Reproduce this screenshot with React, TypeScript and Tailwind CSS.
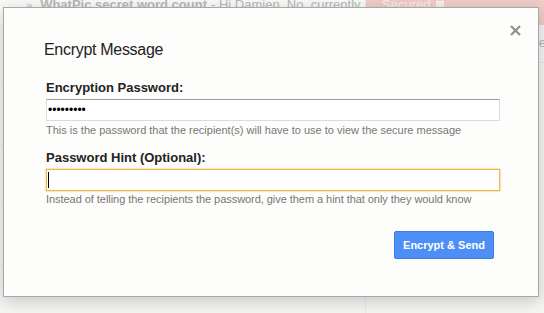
import React from "react";

export default function App() {
  return (
    <div className="relative w-[544px] h-[313px] overflow-hidden bg-[#f6f6f5] font-['Liberation_Sans',Arial,sans-serif]">
      {/* background page */}
      <div className="flex h-full">
        <div className="w-[366px] flex flex-col border-r border-[#ebebeb]">
          <div className="h-[30px] flex items-start pl-[26px] -mt-[5px] text-[13px] text-[#b9b9b9] whitespace-nowrap bg-[#fafaf9] border-b border-[#ececec]">
            <span className="mr-[8px] text-[11px] mt-[2px]">»</span>
            <span className="font-bold">WhatPic secret word count</span>
            <span className="ml-[4px]">- Hi Damien, No, currently</span>
          </div>
          <div className="h-[60px] border-b border-[#ececec]" />
          <div className="h-[60px] border-b border-[#ececec]" />
          <div className="h-[60px] border-b border-[#ececec]" />
          <div className="h-[60px] border-b border-[#ececec]" />
        </div>
        <div className="flex-1 flex flex-col">
          <div className="h-[30px] -mt-[5px] bg-[#f1cdc8] flex items-start pl-[16px] text-[13px] text-[#fbeeec]">
            <span>Secured</span>
            <svg width="10" height="12" viewBox="0 0 10 12" className="ml-[5px] mt-[1px]">
              <rect x="1" y="5" width="8" height="6" fill="#fbeeec" />
              <path d="M2.5 5V3.5a2.5 2.5 0 0 1 5 0V5" fill="none" stroke="#fbeeec" strokeWidth="1.5" />
            </svg>
          </div>
          <div className="h-[38px] flex items-end justify-end text-[13px] text-[#a8b6c8] border-b border-[#e6e6e6]">
            <span className="-mr-[2px] mb-[10px]">te</span>
          </div>
        </div>
      </div>

      {/* modal */}
      <div className="absolute left-[3px] top-[7px] w-[536px] h-[290px] bg-[#fdfdfb] border border-[#a8a8a8] shadow-[0_4px_16px_rgba(0,0,0,0.2)]">
        <button className="absolute left-[506px] top-[17px] w-[11px] h-[11px] flex items-center justify-center">
          <svg width="11" height="11" viewBox="0 0 11 11">
            <path d="M1 1L10 10M10 1L1 10" stroke="#8f8f8f" strokeWidth="2.2" />
          </svg>
        </button>
        <div className="flex flex-col pl-[42px] pt-[33px]">
          <div className="-ml-[2px] text-[16px] leading-[18px] text-[#222] tracking-[-0.3px]">Encrypt Message</div>
          <div className="mt-[21px] text-[13px] leading-[15px] font-bold text-[#222]">Encryption Password:</div>
          <div className="mt-[4px] w-[454px] h-[22px] border border-[#dcdcdc] border-t-[#9c9c9c] bg-white flex items-center pl-[1px]">
            <span className="text-[12px] leading-[12px] text-black">•••••••••</span>
          </div>
          <div className="mt-[3px] text-[11px] leading-[13px] text-[#777]">This is the password that the recipient(s) will have to use to view the secure message</div>
          <div className="mt-[13px] text-[13px] leading-[15px] font-bold text-[#222]">Password Hint (Optional):</div>
          <div className="mt-[4px] w-[454px] h-[22px] border border-[#e8b656] shadow-[0_0_1px_1px_rgba(240,190,90,0.35)] bg-white flex items-center pl-[1px]">
            <span className="w-[1px] h-[16px] bg-black" />
          </div>
          <div className="mt-[2px] text-[11px] leading-[13px] text-[#777] tracking-[-0.05px]">Instead of telling the recipients the password, give them a hint that only they would know</div>
          <div className="mt-[25px] w-[454px] flex justify-end">
            <button className="w-[100px] h-[28px] mr-[6px] rounded-[2px] bg-[#4d8ff5] border border-[#3a7ee8] text-white text-[11px] font-bold">
              Encrypt &amp; Send
            </button>
          </div>
        </div>
      </div>
    </div>
  );
}
